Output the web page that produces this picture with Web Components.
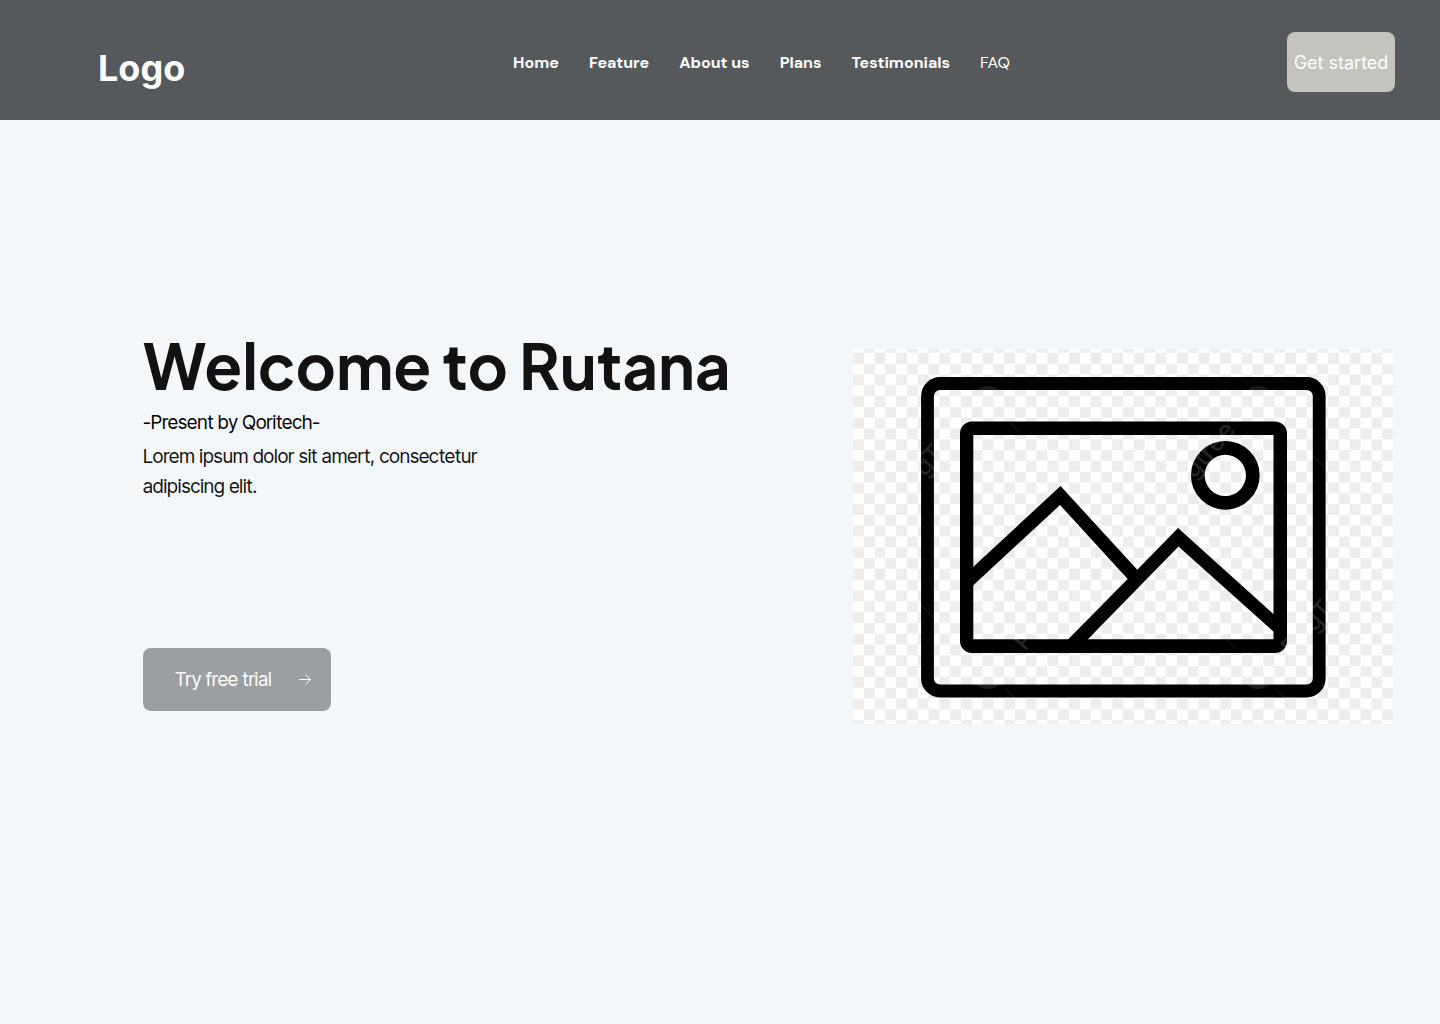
<!DOCTYPE html>
<html lang="en">
<head>
<meta charset="utf-8">
<meta name="viewport" content="width=device-width, initial-scale=1">
<title>Rutana</title>
<style>
body{margin:0;background:#f3f7fa;color:#121212;font-family:Inter,"Liberation Sans",sans-serif}
</style>
</head>
<body>
<rutana-page></rutana-page>
<script>
const define = (name, html) => {
  const template = document.createElement('template');
  template.innerHTML = html;
  customElements.define(name, class extends HTMLElement {
    constructor() {
      super();
      this.attachShadow({mode: 'open'}).append(template.content.cloneNode(true));
    }
  });
};

define('site-nav', `
<style>
:host{display:block}
nav{display:flex;gap:30px}
a{color:#fff;text-decoration:none;font:700 16px/24px "DM Sans",Inter,sans-serif;white-space:nowrap}
a.light{font-weight:400}
</style>
<nav aria-label="Main"><a href="#home">Home</a><a href="#feature">Feature</a><a href="#about">About us</a><a href="#plans">Plans</a><a href="#testimonials">Testimonials</a><a class="light" href="#faq">FAQ</a></nav>`);

define('action-button', `
<style>
:host{display:block}
button{display:flex;align-items:center;justify-content:var(--align,center);gap:26px;width:100%;height:100%;margin:0;padding:var(--pad,0);border:0;border-radius:8px;background:var(--fill);color:#fff;font:400 var(--size,18px)/28px var(--face,Inter),Inter,sans-serif;white-space:nowrap;cursor:pointer}
</style>
<button type="button"><slot></slot><slot name="icon"></slot></button>`);

define('site-header', `
<style>
:host{display:block;background:#56595c}
header{display:grid;grid-template-columns:32% 1fr auto;align-items:center;height:120px;padding:0 45px 0 98px}
.logo{color:#fff;text-decoration:none;font:700 36px/44px Inter,sans-serif;padding-top:16px}
site-nav{padding-top:6px}
action-button{--fill:#c5c3be;--pad:2px 0 0;width:108px;height:60px;padding-top:4px}
</style>
<header><a class="logo" href="#home">Logo</a><site-nav></site-nav><action-button>Get started</action-button></header>`);

define('picture-placeholder', `
<style>
:host{display:block}
svg{display:block;width:100%;height:auto}
.mark{font:500 26px Inter,sans-serif}
</style>
<svg viewBox="0 0 540 375" role="img" aria-label="Picture placeholder">
<defs>
<pattern id="check" width="21.6" height="21.6" y="3.9" patternUnits="userSpaceOnUse"><path fill="#fff" d="M0 0h21.6v21.6H0z"/><path fill="#ededed" d="M0 0h10.8v10.8H0zM10.8 10.8h10.8v10.8H10.8z"/></pattern>
<mask id="ink"><g fill="none" stroke="#fff">
<rect x="74.5" y="34.5" width="391.7" height="307.5" rx="12.5" stroke-width="12.8"/>
<path stroke="none" fill="#fff" fill-rule="evenodd" d="M119 72.5H422a12 12 0 0 1 12 12V292a12 12 0 0 1-12 12H119a12 12 0 0 1-12-12V84.500a12 12 0 0 1 12-12zM120.300 86V290.300H420.500V86z"/>
<circle cx="372.300" cy="126.300" r="27.500" stroke-width="13.700"/>
<path stroke="none" fill="#fff" d="M119 219L207.500 137L284.300 220.700L325 179L421.500 266V283.600L325.500 197.500L234.200 291H214.500L274.700 230L207 156L119 237.400z"/>
</g></mask>
</defs>
<path fill="url(#check)" d="M0 0h540v375H0z"/>
<g mask="url(#ink)">
<path d="M0 0h540v375H0z"/>
<g fill="#1c1c1c"><circle cx="135" cy="54" r="17"/><circle cx="405" cy="54" r="17"/><circle cx="135" cy="323" r="17"/><circle cx="405" cy="323" r="17"/></g>
<g class="mark" fill="#242424">
<text transform="translate(72 129) rotate(-49)">gTr</text>
<text transform="translate(341 131) rotate(-49)">gtree</text>
<text transform="translate(172 303) rotate(-49)">P</text>
<text transform="translate(440 309) rotate(-49)">PngT</text>
</g>
<path stroke="#1c1c1c" d="M157 74l11 11M460 107l12 12M68 256l12 12M374 290l8 10M152 340l9 8M422 340l9 8"/>
</g>
</svg>`);

define('hero-section', `
<style>
:host{display:block}
section{display:grid;grid-template-columns:1fr 43.2%;align-items:start;column-gap:24px;padding:210px 47px 64px 143px;box-sizing:border-box}
h1{margin:0;font:700 62px/70px "Plus Jakarta Sans",Inter,sans-serif;white-space:nowrap}
p{margin:0;max-width:360px;font:400 19px/30px "Inter Tight",Inter,sans-serif}
.by{color:#000;margin:8px 0 4px}
action-button{--fill:#9b9ea2;--face:"Inter Tight";--size:19px;--align:flex-start;--pad:0 0 0 32px;width:188px;height:63px;margin-top:146px}
picture-placeholder{margin-top:19px;width:100%}
</style>
<section>
<div><h1>Welcome to Rutana</h1><p class="by">-Present by Qoritech-</p><p>Lorem ipsum dolor sit amert, consectetur adipiscing elit.</p>
<action-button>Try free trial<svg slot="icon" width="14" height="14" viewBox="0 0 14 14" fill="none" stroke="#fff" aria-hidden="true"><path d="M1 6.500h11.500M7.500 1.500l5 5-5 5"/></svg></action-button></div>
<picture-placeholder></picture-placeholder>
</section>`);

define('rutana-page', `
<style>:host{display:block;min-height:100vh}</style>
<site-header></site-header><main><hero-section></hero-section></main>`);
</script>
</body>
</html>
